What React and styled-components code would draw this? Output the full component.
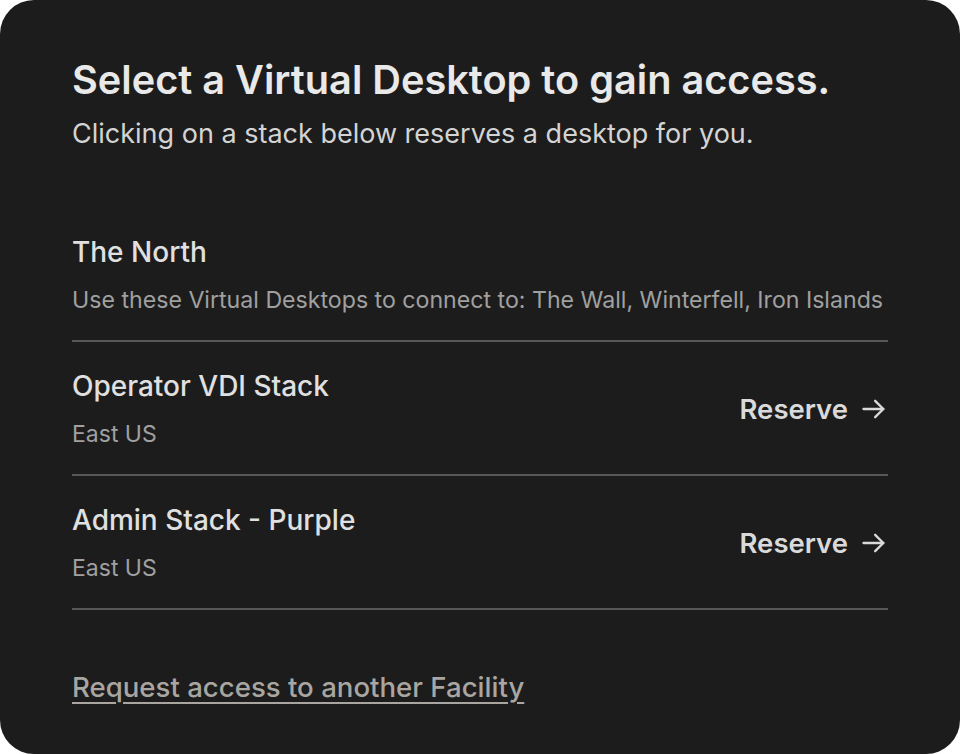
import React from 'react'
import styled, { createGlobalStyle } from 'styled-components'

const GlobalStyle = createGlobalStyle`
  html, body {
    margin: 0;
    padding: 0;
    background: #ffffff;
  }
  body {
    font-family: Inter, "Noto Sans", sans-serif;
    -webkit-font-smoothing: antialiased;
  }
`

const Card = styled.main`
  box-sizing: border-box;
  width: 960px;
  height: 754px;
  background: #1c1c1c;
  border-radius: 34px;
  padding: 58px 72px 0;
  display: flex;
  flex-direction: column;
`

const Title = styled.h1`
  margin: 0;
  font-size: 39.7px;
  font-weight: 600;
  line-height: 44px;
  color: #e9e9e9;
`

const Subtitle = styled.p`
  margin: 14px 0 0;
  font-size: 27px;
  font-weight: 400;
  line-height: 36px;
  color: #d4d4d4;
`

const Group = styled.section`
  margin-top: 82px;
  display: flex;
  flex-direction: column;
`

const GroupHead = styled.div`
  padding-bottom: 25px;
  border-bottom: 2px solid #575757;
`

const GroupName = styled.h2`
  margin: 0;
  font-size: 28px;
  font-weight: 550;
  line-height: 36px;
  color: #e0e0e0;
`

const GroupDesc = styled.p`
  margin: 15px 0 0;
  font-size: 23.15px;
  font-weight: 400;
  line-height: 30px;
  color: #a0a0a0;
`

const StackRow = styled.div`
  display: flex;
  align-items: center;
  justify-content: space-between;
  padding: 26px 0 25px;
  border-bottom: 2px solid #575757;
`

const StackInfo = styled.div`
  display: flex;
  flex-direction: column;
  gap: 15px;
`

const StackName = styled.span`
  font-size: 28px;
  font-weight: 500;
  line-height: 36px;
  color: #e0e0e0;
`

const StackRegion = styled.span`
  font-size: 23px;
  font-weight: 400;
  line-height: 30px;
  color: #a0a0a0;
`

const ReserveButton = styled.button`
  display: flex;
  align-items: center;
  gap: 12px;
  padding: 0;
  border: 0;
  background: none;
  cursor: pointer;
  font-family: inherit;
  font-size: 27.5px;
  font-weight: 600;
  line-height: 36px;
  color: #dadada;
`

const RequestLink = styled.a`
  margin-top: 59px;
  align-self: flex-start;
  font-size: 27.6px;
  font-weight: 500;
  line-height: 36px;
  color: #a9a6a2;
  text-decoration: underline;
  text-decoration-thickness: 2px;
  text-underline-offset: 5px;
  cursor: pointer;
`

const Arrow = () => (
  <svg width="28" height="28" viewBox="0 0 24 24" fill="none" stroke="currentColor" strokeWidth="2" strokeLinecap="round" strokeLinejoin="round">
    <path d="M3 12h17" />
    <path d="M13 5l7 7-7 7" />
  </svg>
)

const stacks = [
  { name: 'Operator VDI Stack', region: 'East US' },
  { name: 'Admin Stack - Purple', region: 'East US' },
]

export default function App() {
  return (
    <>
      <GlobalStyle />
      <Card>
        <Title>Select a Virtual Desktop to gain access.</Title>
        <Subtitle>Clicking on a stack below reserves a desktop for you.</Subtitle>
        <Group>
          <GroupHead>
            <GroupName>The North</GroupName>
            <GroupDesc>Use these Virtual Desktops to connect to: The Wall, Winterfell, Iron Islands</GroupDesc>
          </GroupHead>
          {stacks.map(s => (
            <StackRow key={s.name}>
              <StackInfo>
                <StackName>{s.name}</StackName>
                <StackRegion>{s.region}</StackRegion>
              </StackInfo>
              <ReserveButton>
                Reserve <Arrow />
              </ReserveButton>
            </StackRow>
          ))}
        </Group>
        <RequestLink>Request access to another Facility</RequestLink>
      </Card>
    </>
  )
}
